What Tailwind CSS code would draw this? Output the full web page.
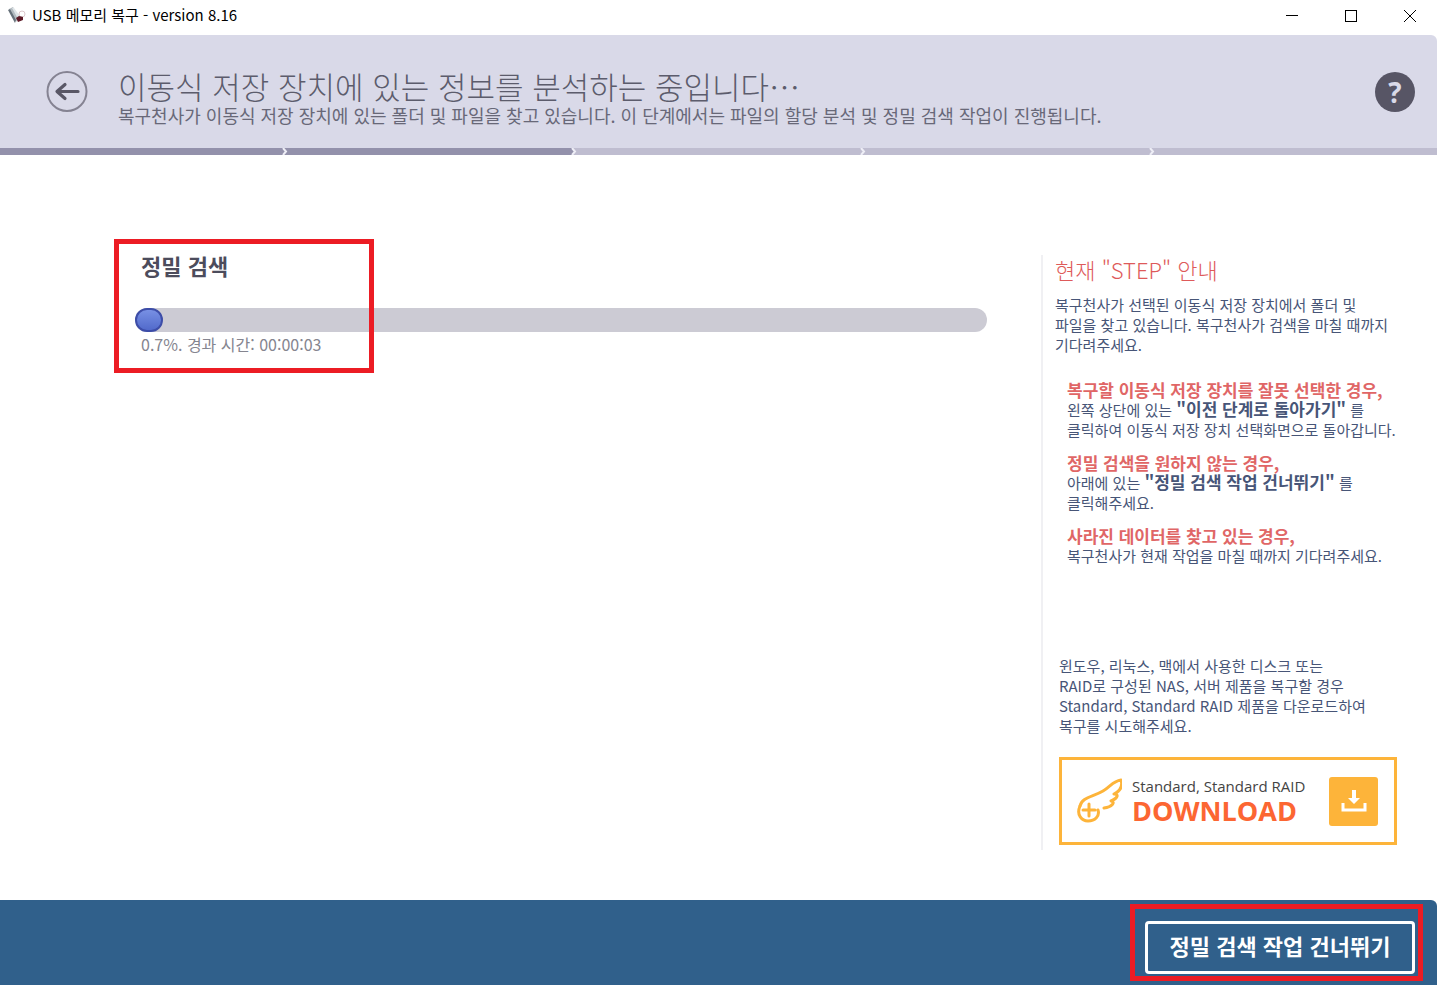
<!DOCTYPE html>
<html lang="ko">

<head>
    <meta charset="UTF-8">
    <meta name="viewport" content="width=device-width, initial-scale=1.0">
    <title>USB 메모리 복구</title>
    <script src="https://cdn.jsdelivr.net/npm/@tailwindcss/browser@4"></script>
</head>

<body class="min-h-screen flex flex-col bg-white font-['Noto_Sans_CJK_KR',sans-serif] text-[#475577]">
    <!-- title bar -->
    <div class="h-[35px] flex items-center justify-between pl-2 text-black">
        <div class="flex items-center gap-1.5 pb-1.5">
            <svg class="w-[18px] h-[18px]" viewBox="0 0 18 18">
                <path d="M1 3l4-2 6 10-3 5z" fill="#b3bbc0" />
                <path d="M0 4l2-1 6 11-1 3z" fill="#66717a" />
                <path d="M4 2l2 0 6 8-3 1z" fill="#dfe5e8" />
                <circle cx="14" cy="8" r="3" fill="#fff" stroke="#dcc8cc" />
                <path d="M8 12l3-2 4 1 0 3-5 2z" fill="#5d1926" />
            </svg>
            <span class="text-[15px] leading-6">USB 메모리 복구 - version 8.16</span>
        </div>
        <div class="flex gap-[5px] pb-1">
            <button aria-label="최소화" class="w-[54px] h-8 flex items-center justify-center">
                <svg class="w-3 h-3" viewBox="0 0 12 12" stroke="#000" shape-rendering="crispEdges"><path d="M0 5.5h12" /></svg>
            </button>
            <button aria-label="최대화" class="w-[54px] h-8 flex items-center justify-center">
                <svg class="w-3 h-3" viewBox="0 0 12 12" fill="none" stroke="#000" shape-rendering="crispEdges"><path d="M.5.5h11v11H.5z" /></svg>
            </button>
            <button aria-label="닫기" class="w-[54px] h-8 flex items-center justify-center">
                <svg class="w-3 h-3" viewBox="0 0 12 12" stroke="#000"><path d="M0 0l12 12M12 0L0 12" /></svg>
            </button>
        </div>
    </div>

    <!-- header -->
    <header class="h-[113px] flex items-center bg-[#d9d9e8] rounded-tr-md pl-[46px] pr-[22px] text-[#686878]">
        <button aria-label="이전 단계로 돌아가기" class="w-[42px] h-[42px] shrink-0">
            <svg viewBox="0 0 42 42" fill="none">
                <circle cx="21" cy="20.500" r="19.5" stroke="#858392" stroke-width="2" />
                <path d="M32 20.500H12M19 13.500l-8 7 8 7" stroke="#595766" stroke-width="3.2" stroke-linecap="round" stroke-linejoin="round" />
            </svg>
        </button>
        <div class="flex-1 pl-[30px] pt-3">
            <h1 class="text-[31px] leading-[34px] font-light text-[#5c5c6c]">이동식 저장 장치에 있는 정보를 분석하는 중입니다⋯</h1>
            <p class="text-lg leading-6">복구천사가 이동식 저장 장치에 있는 폴더 및 파일을 찾고 있습니다. 이 단계에서는 파일의 할당 분석 및 정밀 검색 작업이 진행됩니다.</p>
        </div>
        <button aria-label="도움말" class="w-10 h-10 shrink-0 rounded-full bg-[#575565] text-[#d9d9e8] font-['Open_Sans',sans-serif] font-bold text-[28px] leading-10">?</button>
    </header>

    <!-- steps -->
    <div class="grid grid-cols-[repeat(4,289fr)_281fr] h-[7px]">
        <div class="flex justify-end bg-[#9391ab]"><svg class="w-[7px] h-[7px]" viewBox="0 0 7 7" fill="none" stroke="#eeeef6" stroke-width="2"><path d="M1 0l3 3.5L1 7" /></svg></div>
        <div class="flex justify-end bg-[#9391ab]"><svg class="w-[7px] h-[7px] bg-[#bfbdd0]" viewBox="0 0 7 7" fill="none" stroke="#eeeef6" stroke-width="2"><path d="M0 0h1l3 3.500L1 7H0z" fill="#9391ab" stroke="none" /><path d="M1 0l3 3.5L1 7" /></svg></div>
        <div class="flex justify-end bg-[#bfbdd0]"><svg class="w-[7px] h-[7px]" viewBox="0 0 7 7" fill="none" stroke="#eeeef6" stroke-width="2"><path d="M1 0l3 3.5L1 7" /></svg></div>
        <div class="flex justify-end bg-[#bfbdd0]"><svg class="w-[7px] h-[7px]" viewBox="0 0 7 7" fill="none" stroke="#eeeef6" stroke-width="2"><path d="M1 0l3 3.5L1 7" /></svg></div>
        <div class="bg-[#bfbdd0]"></div>
    </div>

    <main class="flex-1 flex pt-[100px] pb-[50px]">
        <section class="relative flex-1 pl-[135px] pr-[54px]">
            <h2 class="pl-1.5 text-[22px] leading-5 font-bold text-[#4c4c5c]">정밀 검색</h2>
            <div role="progressbar" aria-valuenow="0.7" aria-valuemin="0" aria-valuemax="100" aria-label="정밀 검색" class="mt-[33px] h-6 rounded-full bg-[#cccbd4]">
                <div class="w-7 h-6 rounded-full border-2 border-[#3d4da8] bg-linear-to-b from-[#7890e4] to-[#526acb]"></div>
            </div>
            <p class="pl-1.5 text-base leading-6 text-[#85858f]">0.7%. 경과 시간: 00:00:03</p>
            <div class="absolute left-[114px] -top-4 w-[260px] h-[134px] border-5 border-[#ec1c24] pointer-events-none"></div>
        </section>

        <aside class="w-[396px] border-l-2 border-[#f0f0f3] pl-3 text-[15px] leading-5">
            <h2 class="text-[22px] leading-7 font-light text-[#de5a5a]">현재 "STEP" 안내</h2>
            <p class="mt-3">복구천사가 선택된 이동식 저장 장치에서 폴더 및<br>파일을 찾고 있습니다. 복구천사가 검색을 마칠 때까지<br>기다려주세요.</p>
            <div class="mt-[25px] pl-3 flex flex-col gap-[13px]">
                <div>
                    <h3 class="text-[17px] leading-5 font-bold text-[#e06666]">복구할 이동식 저장 장치를 잘못 선택한 경우,</h3>
                    <p>왼쪽 상단에 있는 <b class="text-[17px] leading-none">"이전 단계로 돌아가기"</b> 를<br>클릭하여 이동식 저장 장치 선택화면으로 돌아갑니다.</p>
                </div>
                <div>
                    <h3 class="text-[17px] leading-5 font-bold text-[#e06666]">정밀 검색을 원하지 않는 경우,</h3>
                    <p>아래에 있는 <b class="text-[17px] leading-none">"정밀 검색 작업 건너뛰기"</b> 를<br>클릭해주세요.</p>
                </div>
                <div>
                    <h3 class="text-[17px] leading-5 font-bold text-[#e06666]">사라진 데이터를 찾고 있는 경우,</h3>
                    <p>복구천사가 현재 작업을 마칠 때까지 기다려주세요.</p>
                </div>
            </div>
            <p class="mt-[90px] pl-1">윈도우, 리눅스, 맥에서 사용한 디스크 또는<br>RAID로 구성된 NAS, 서버 제품을 복구할 경우<br>Standard, Standard RAID 제품을 다운로드하여<br>복구를 시도해주세요.</p>
            <a href="#" class="mt-[21px] ml-1 w-[338px] h-[88px] flex items-center border-3 border-[#fdb43a] pl-3.5 pr-4 font-['Open_Sans',sans-serif]">
                <svg class="w-[46px] h-[46px]" viewBox="0 0 46 46" fill="none" stroke="#fdb43a" stroke-width="3" stroke-linejoin="round" stroke-linecap="round">
                    <path d="M4 28C6 19 17 19 27 13C35 8 37 3 45 2C47 8 44 13 38 16C43 16 42 20 35 23C40 24 36 29 28 30" />
                    <path d="M4 28C0 37 6 43 12 43C19 43 24 38 22 32M13 26v12M7 32h12" />
                </svg>
                <span class="ml-2.5 flex-1 flex flex-col">
                    <span class="text-[15px] leading-5 text-[#444]">Standard, Standard RAID</span>
                    <span class="text-[27px] leading-[30px] font-bold text-[#fc6632]">DOWNLOAD</span>
                </span>
                <svg class="w-[49px] h-[49px]" viewBox="0 0 49 49">
                    <rect width="49" height="49" rx="3" fill="#fdb43a" />
                    <path d="M23 13h4v8h4l-6 6-6-6h4z" fill="#fff" />
                    <path d="M14 26v7h22v-7" fill="none" stroke="#fff" stroke-width="3" />
                </svg>
            </a>
        </aside>
    </main>

    <footer class="h-[85px] flex justify-end items-start bg-[#30608b] rounded-tr-md pt-1 pr-3.5">
        <div class="border-5 border-[#ec1c24] w-[293px] h-[77px] pt-3 pl-2.5">
            <button class="w-[270px] h-[53px] pb-1.5 border-[3px] border-white rounded-sm text-[22px] leading-6 font-bold text-white">정밀 검색 작업 건너뛰기</button>
        </div>
    </footer>
</body>

</html>
